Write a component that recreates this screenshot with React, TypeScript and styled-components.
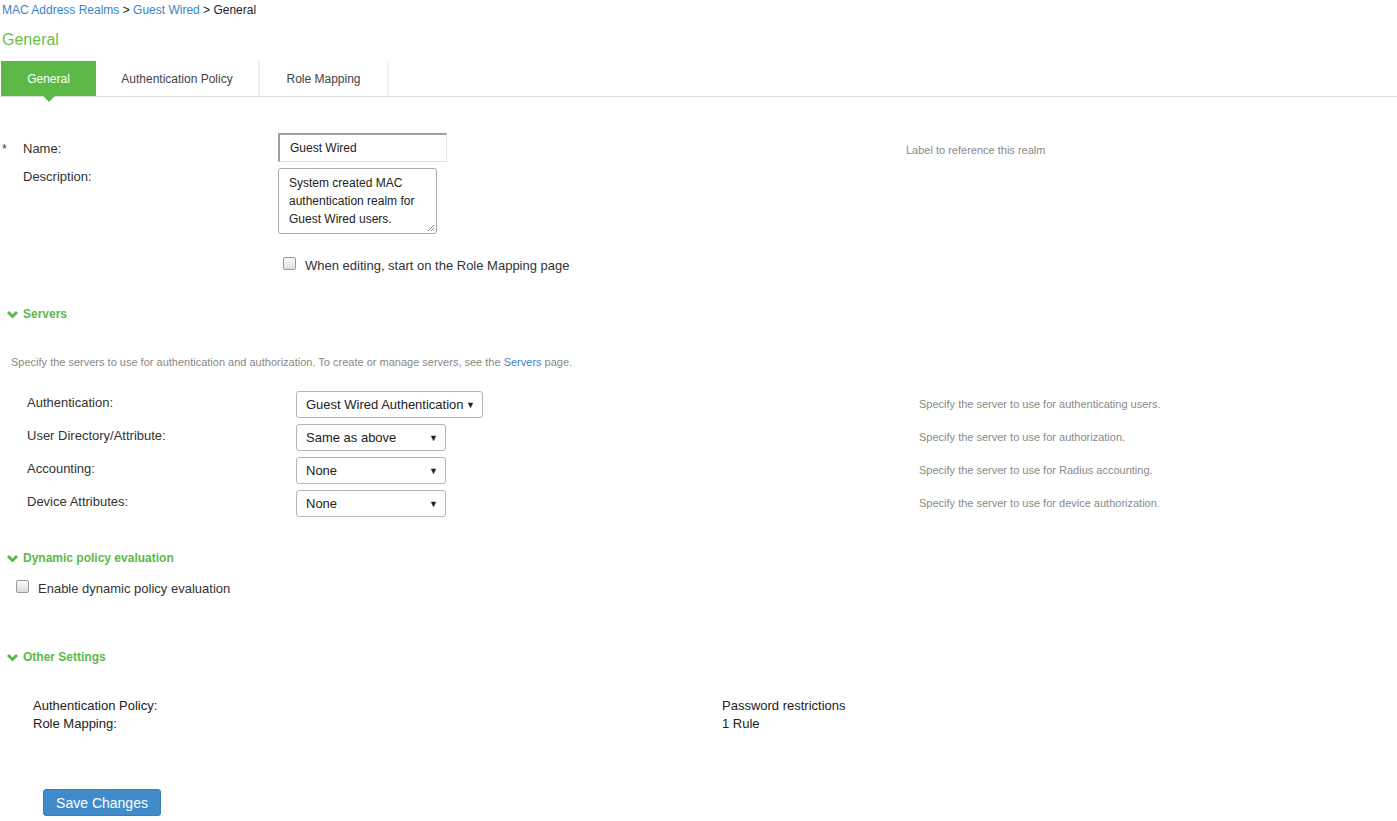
import React from "react";
import styled, { createGlobalStyle } from "styled-components";

const Global = createGlobalStyle`
  html, body { margin: 0; padding: 0; background: #fff; }
  body { font-family: "Liberation Sans", Arial, sans-serif; color: #333; }
  * { box-sizing: border-box; }
`;

const Page = styled.div`
  width: 1397px;
  height: 821px;
  overflow: hidden;
  position: relative;
`;

const Breadcrumb = styled.div`
  padding: 3px 0 0 2px;
  font-size: 12px;
  line-height: 14px;
  color: #222;
`;

const Crumb = styled.a`
  color: #3c84c6;
  text-decoration: none;
`;

const Title = styled.h1`
  margin: 14px 0 0 2px;
  font-size: 16px;
  font-weight: normal;
  color: #6abf4b;
  line-height: 18px;
`;

const TabBar = styled.div`
  margin-top: 12px;
  display: flex;
  border-bottom: 1px solid #dcdcdc;
  padding-left: 1px;
`;

const Tab = styled.div<{ $active?: boolean; $w: number }>`
  position: relative;
  width: ${(p) => p.$w}px;
  height: 35px;
  display: flex;
  align-items: center;
  justify-content: center;
  font-size: 12px;
  color: ${(p) => (p.$active ? "#fff" : "#444")};
  background: ${(p) => (p.$active ? "#5cb947" : "#fff")};
  border-right: ${(p) => (p.$active ? "none" : "2px solid #f0f0f0")};
  ${(p) =>
    p.$active &&
    `&::after {
      content: "";
      position: absolute;
      left: 50%;
      bottom: -6px;
      margin-left: -6px;
      border-left: 6px solid transparent;
      border-right: 6px solid transparent;
      border-top: 6px solid #5cb947;
    }`}
`;

const FormGrid = styled.div`
  display: grid;
  grid-template-columns: 23px 255px 628px 1fr;
  margin-top: 36px;
  font-size: 13px;
`;

const Star = styled.div`
  padding-left: 2px;
  padding-top: 9px;
  font-size: 12px;
  color: #333;
`;

const FieldLabel = styled.div<{ $pt: number }>`
  padding-top: ${(p) => p.$pt}px;
  color: #333;
`;

const HelpText = styled.div<{ $pt: number }>`
  padding-top: ${(p) => p.$pt}px;
  font-size: 11px;
  color: #8a8a8a;
`;

const TextInput = styled.div`
  width: 169px;
  height: 29px;
  border: 1px solid #e4e4e4;
  border-top: 2px solid #a0a0a0;
  border-left: 2px solid #a0a0a0;
  padding: 6px 0 0 10px;
  font-size: 12px;
  color: #222;
`;

const TextArea = styled.div`
  position: relative;
  margin-top: 6px;
  width: 159px;
  height: 66px;
  border: 1px solid #aaa;
  border-radius: 3px;
  padding: 5px 0 0 10px;
  font-size: 12px;
  line-height: 18px;
  color: #222;
`;

const Grip = styled.svg`
  position: absolute;
  right: 1px;
  bottom: 1px;
`;

const CheckRow = styled.label<{ $ml: number; $mt: number }>`
  display: flex;
  align-items: center;
  gap: 9px;
  margin-left: ${(p) => p.$ml}px;
  margin-top: ${(p) => p.$mt}px;
  font-size: 13px;
  color: #333;
`;

const Box = styled.span`
  width: 13px;
  height: 13px;
  border: 1px solid #9a9a9a;
  border-radius: 2px;
  background: linear-gradient(#fafafa, #dedede);
  margin-top: -4px;
`;

const SectionHead = styled.div<{ $mt: number }>`
  display: flex;
  align-items: center;
  gap: 5px;
  margin-left: 7px;
  margin-top: ${(p) => p.$mt}px;
  font-size: 12px;
  font-weight: bold;
  color: #5cb947;
`;

const Intro = styled.div`
  margin: 35px 0 0 11px;
  font-size: 11px;
  color: #888;
`;

const Link = styled.a`
  color: #3c84c6;
  text-decoration: none;
`;

const ServerGrid = styled.div`
  display: grid;
  grid-template-columns: 269px 623px 1fr;
  grid-auto-rows: 33px;
  margin: 22px 0 0 27px;
  font-size: 13px;
`;

const Select = styled.div<{ $w: number }>`
  width: ${(p) => p.$w}px;
  height: 27px;
  border: 1px solid #b5b5b5;
  border-radius: 3px;
  display: flex;
  align-items: center;
  justify-content: space-between;
  padding: 0 7px 0 9px;
  font-size: 13px;
  color: #222;
  margin-top: 1px;
`;

const Caret = styled.span`
  font-size: 9px;
  color: #222;
`;

const SummaryGrid = styled.div`
  display: grid;
  grid-template-columns: 689px 1fr;
  margin: 33px 0 0 33px;
  font-size: 13px;
  line-height: 18px;
  color: #222;
`;

const SaveButton = styled.button`
  margin: 56px 0 0 43px;
  width: 118px;
  height: 27px;
  border: 1px solid #3a7dbb;
  border-radius: 3px;
  background: #428bca;
  color: #fff;
  font-family: "Liberation Sans", Arial, sans-serif;
  font-size: 14px;
  padding: 0;
`;

const Chevron = () => (
  <svg width="11" height="9" viewBox="0 0 11 9">
    <path d="M1 2 L5.5 6.5 L10 2" fill="none" stroke="#5cb947" strokeWidth="3" />
  </svg>
);

const servers = [
  { label: "Authentication:", value: "Guest Wired Authentication", w: 187, help: "Specify the server to use for authenticating users." },
  { label: "User Directory/Attribute:", value: "Same as above", w: 150, help: "Specify the server to use for authorization." },
  { label: "Accounting:", value: "None", w: 150, help: "Specify the server to use for Radius accounting." },
  { label: "Device Attributes:", value: "None", w: 150, help: "Specify the server to use for device authorization." },
];

export default function App() {
  return (
    <Page>
      <Global />
      <Breadcrumb>
        <Crumb>MAC Address Realms</Crumb> &gt; <Crumb>Guest Wired</Crumb> &gt; General
      </Breadcrumb>
      <Title>General</Title>
      <TabBar>
        <Tab $active $w={95}>General</Tab>
        <Tab $w={164}>Authentication Policy</Tab>
        <Tab $w={129}>Role Mapping</Tab>
      </TabBar>

      <FormGrid>
        <Star>*</Star>
        <FieldLabel $pt={8}>Name:</FieldLabel>
        <div>
          <TextInput>Guest Wired</TextInput>
        </div>
        <HelpText $pt={11}>Label to reference this realm</HelpText>

        <div />
        <FieldLabel $pt={7}>Description:</FieldLabel>
        <div>
          <TextArea>
            System created MAC
            <br />
            authentication realm for
            <br />
            Guest Wired users.
            <Grip width="8" height="8" viewBox="0 0 8 8">
              <path d="M7 1 L1 7 M7 4 L4 7" stroke="#888" strokeWidth="1" />
            </Grip>
          </TextArea>
        </div>
        <div />
      </FormGrid>

      <CheckRow $ml={283} $mt={24}>
        <Box />
        When editing, start on the Role Mapping page
      </CheckRow>

      <SectionHead $mt={34}>
        <Chevron />
        Servers
      </SectionHead>
      <Intro>
        Specify the servers to use for authentication and authorization. To create or manage servers, see the{" "}
        <Link>Servers</Link> page.
      </Intro>

      <ServerGrid>
        {servers.map((s) => (
          <React.Fragment key={s.label}>
            <FieldLabel $pt={5}>{s.label}</FieldLabel>
            <div>
              <Select $w={s.w}>
                {s.value}
                <Caret>▼</Caret>
              </Select>
            </div>
            <HelpText $pt={8}>{s.help}</HelpText>
          </React.Fragment>
        ))}
      </ServerGrid>

      <SectionHead $mt={29}>
        <Chevron />
        Dynamic policy evaluation
      </SectionHead>
      <CheckRow $ml={16} $mt={16}>
        <Box />
        Enable dynamic policy evaluation
      </CheckRow>

      <SectionHead $mt={54}>
        <Chevron />
        Other Settings
      </SectionHead>

      <SummaryGrid>
        <div>Authentication Policy:</div>
        <div>Password restrictions</div>
        <div>Role Mapping:</div>
        <div>1 Rule</div>
      </SummaryGrid>

      <SaveButton>Save Changes</SaveButton>
    </Page>
  );
}
